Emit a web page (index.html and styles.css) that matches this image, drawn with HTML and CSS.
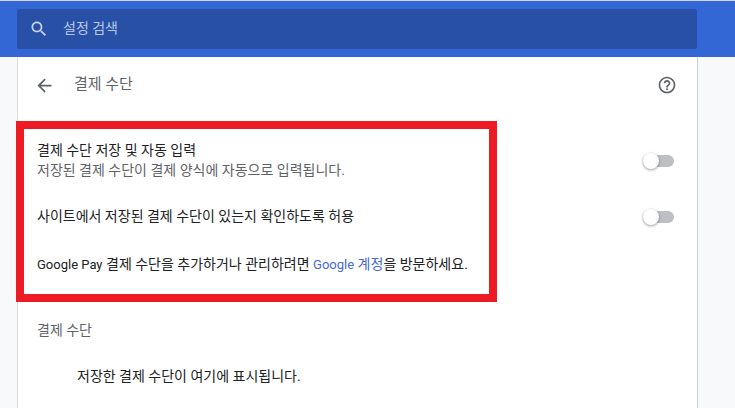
FILE: index.html
```html
<!DOCTYPE html>
<html lang="ko">
<head>
    <meta charset="UTF-8">
    <title>결제 수단</title>
    <link rel="stylesheet" href="styles.css">
</head>
<body>
<div class="topbar">
    <div class="search">
        <svg class="search-icon" viewBox="0 0 24 24"><path d="M15.5 14h-.79l-.28-.27C15.41 12.59 16 11.11 16 9.5 16 5.91 13.09 3 9.5 3S3 5.91 3 9.5 5.91 16 9.5 16c1.61 0 3.09-.59 4.23-1.57l.27.28v.79l5 4.99L20.49 19l-4.99-5zm-6 0C7.01 14 5 11.99 5 9.5S7.01 5 9.5 5 14 7.01 14 9.5 11.99 14 9.5 14z"/></svg>
        <span class="search-text">설정 검색</span>
    </div>
</div>
<div class="card">
    <div class="head">
        <svg class="back" viewBox="0 0 24 24"><path d="M20 11H7.83l5.59-5.59L12 4l-8 8 8 8 1.41-1.41L7.83 13H20v-2z"/></svg>
        <span class="title">결제 수단</span>
        <svg class="help" viewBox="0 0 24 24"><path d="M11 18h2v-2h-2v2zm1-16C6.48 2 2 6.48 2 12s4.48 10 10 10 10-4.48 10-10S17.52 2 12 2zm0 18c-4.41 0-8-3.59-8-8s3.59-8 8-8 8 3.59 8 8-3.59 8-8 8zm0-14c-2.21 0-4 1.79-4 4h2c0-1.1.9-2 2-2s2 .9 2 2c0 2-3 1.75-3 5h2c0-2.25 3-2.5 3-5 0-2.21-1.79-4-4-4z"/></svg>
    </div>
    <div class="row row-first">
        <div>
            <div class="label">결제 수단 저장 및 자동 입력</div>
            <div class="sub">저장된 결제 수단이 결제 양식에 자동으로 입력됩니다.</div>
        </div>
        <div class="toggle"><span class="knob"></span></div>
    </div>
    <div class="row row-second">
        <div class="label">사이트에서 저장된 결제 수단이 있는지 확인하도록 허용</div>
        <div class="toggle"><span class="knob"></span></div>
    </div>
    <div class="row row-third">
        <div class="label"><span class="latin">Google Pay</span> 결제 수단을 추가하거나 관리하려면 <a class="link"><span class="latin">Google</span> 계정</a>을 방문하세요.</div>
    </div>
    <div class="section">결제 수단</div>
    <div class="empty">저장한 결제 수단이 여기에 표시됩니다.</div>
</div>
<div class="redbox"></div>
</body>
</html>
```

FILE: styles.css
```css
* {
    margin: 0;
    padding: 0;
    box-sizing: border-box;
}
html, body {
    height: 100%;
    overflow: hidden;
}
body {
    background: #f8f9fa;
    font-family: Roboto, "Noto Sans CJK KR", sans-serif;
    font-size: 14px;
    color: #202124;
    border-top: 1px solid #d4d4d4;
}
.topbar {
    height: 56px;
    background: #3367d6;
    padding: 8px 38px 8px 17px;
}
.search {
    height: 40px;
    background: #2850a7;
    border-radius: 2px;
    display: flex;
    align-items: center;
    padding-left: 12px;
}
.search-icon {
    width: 20px;
    height: 20px;
    fill: #c6d3ee;
}
.search-text {
    margin-left: 14px;
    font-size: 14px;
    line-height: 16px;
    margin-top: -3px;
    color: #b9c9ea;
}
.card {
    width: 681px;
    height: 360px;
    margin-left: 17px;
    background: #fff;
    border-left: 1px solid #d9dadc;
    border-right: 1px solid #d0d1d3;
}
.head {
    height: 56px;
    display: flex;
    align-items: center;
    padding: 0 20px 0 16px;
}
.back {
    width: 21px;
    height: 21px;
    fill: #5f6368;
}
.title {
    margin-left: 19px;
    font-size: 15px;
    line-height: 18px;
    margin-top: -2px;
    color: #5f6368;
    flex: 1;
}
.help {
    width: 20px;
    height: 20px;
    fill: #5f6368;
}
.row {
    display: flex;
    align-items: center;
    justify-content: space-between;
    padding: 0 23px 0 19px;
}
.row-first {
    height: 56px;
    margin-top: 19px;
}
.row-second {
    height: 56px;
}
.row-third {
    height: 40px;
}
.label {
    line-height: 20px;
}
.latin {
    font-size: 13px;
}
.sub {
    line-height: 20px;
    color: #5f6368;
}
.link {
    color: #4668d8;
}
.toggle {
    width: 31px;
    height: 12px;
    margin-top: 1px;
    border-radius: 6px;
    background: #bdc1c6;
    position: relative;
}
.knob {
    position: absolute;
    left: 0;
    top: -2px;
    width: 16px;
    height: 16px;
    border-radius: 50%;
    background: #fff;
    box-shadow: 0 1px 3px rgba(0, 0, 0, .4);
}
.section {
    margin-top: 36px;
    padding-left: 19px;
    line-height: 20px;
    color: #5f6368;
}
.empty {
    margin-top: 26px;
    padding-left: 59px;
    line-height: 20px;
}
.redbox {
    position: absolute;
    left: 16px;
    top: 121px;
    width: 481px;
    height: 181px;
    border: 8px solid #ed1c24;
}
```
